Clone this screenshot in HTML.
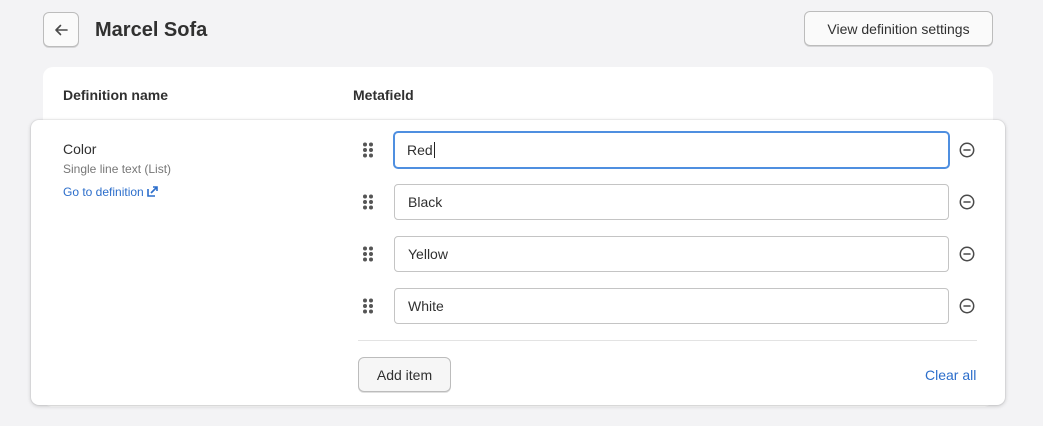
<!DOCTYPE html>
<html><head><style>
*{box-sizing:border-box;margin:0;padding:0}
body{width:1043px;height:426px;background:#f3f3f5;font-family:"Liberation Sans",sans-serif;color:#303030;position:relative;overflow:hidden;font-size:14px}
.abs{position:absolute}
.btn{position:absolute;background:#fafafa;border:1px solid #bcbcbc;border-radius:6px;box-shadow:0 1px 0 rgba(0,0,0,.12);display:flex;align-items:center;justify-content:center;font-size:14px;color:#303030}
.inp{position:absolute;left:394px;width:555px;height:36px;border:1px solid #c4c4c4;border-radius:4px;background:#fff;padding-left:13px;display:flex;align-items:center;font-size:14px;color:#303030}
.drag{position:absolute;left:362px;width:12px;height:16px}
.minus{position:absolute;left:959px;width:16px;height:16px}
</style></head><body>
<div class="btn" style="left:43px;top:12px;width:36px;height:35px">
<svg width="16" height="16" viewBox="0 0 16 16"><path d="M14 8H3M7.5 3.5L3 8l4.5 4.5" fill="none" stroke="#4a4a4a" stroke-width="1.6" stroke-linecap="round" stroke-linejoin="round"/></svg></div>
<div class="abs" style="left:95px;top:19px;font-size:20px;font-weight:bold;color:#303030">Marcel Sofa</div>
<div class="btn" style="left:804px;top:11px;width:189px;height:35px">View definition settings</div>
<div class="abs" style="left:43px;top:67px;width:950px;height:340px;background:#fff;border-radius:10px"></div>
<div class="abs" style="left:63px;top:87px;font-weight:bold;font-size:14px">Definition name</div>
<div class="abs" style="left:353px;top:87px;font-weight:bold;font-size:14px">Metafield</div>
<div class="abs" style="left:31px;top:120px;width:974px;height:285px;background:#fff;border-radius:8px;box-shadow:0 1px 4px rgba(0,0,0,.2),0 0 0 1px rgba(0,0,0,.04)"></div>
<div class="abs" style="left:63px;top:141px;font-size:14px">Color</div>
<div class="abs" style="left:63px;top:162px;font-size:12px;color:#777">Single line text (List)</div>
<div class="abs" style="left:63px;top:185px;font-size:12px;color:#2c6ecb">Go to definition <svg width="11" height="11" viewBox="0 0 11 11" style="vertical-align:-1px"><path d="M1 3v7h7M4 7l6-6M6 1h4v4" fill="none" stroke="#2c6ecb" stroke-width="1.6"/></svg></div>

<div class="inp" style="left:393px;top:131px;width:557px;height:38px;border:2px solid #4f8fe0;border-radius:5px;padding-left:12px">Red<span style="display:inline-block;width:1px;height:16px;background:#222;margin-left:1px"></span></div>
<div class="inp" style="top:184px">Black</div>
<div class="inp" style="top:236px">Yellow</div>
<div class="inp" style="top:288px">White</div>

<svg class="drag" style="top:142px" viewBox="0 0 12 16"><g fill="#555"><circle cx="3" cy="2.5" r="2"/><circle cx="9" cy="2.5" r="2"/><circle cx="3" cy="8" r="2"/><circle cx="9" cy="8" r="2"/><circle cx="3" cy="13.5" r="2"/><circle cx="9" cy="13.5" r="2"/></g></svg>
<svg class="drag" style="top:194px" viewBox="0 0 12 16"><g fill="#555"><circle cx="3" cy="2.5" r="2"/><circle cx="9" cy="2.5" r="2"/><circle cx="3" cy="8" r="2"/><circle cx="9" cy="8" r="2"/><circle cx="3" cy="13.5" r="2"/><circle cx="9" cy="13.5" r="2"/></g></svg>
<svg class="drag" style="top:246px" viewBox="0 0 12 16"><g fill="#555"><circle cx="3" cy="2.5" r="2"/><circle cx="9" cy="2.5" r="2"/><circle cx="3" cy="8" r="2"/><circle cx="9" cy="8" r="2"/><circle cx="3" cy="13.5" r="2"/><circle cx="9" cy="13.5" r="2"/></g></svg>
<svg class="drag" style="top:298px" viewBox="0 0 12 16"><g fill="#555"><circle cx="3" cy="2.5" r="2"/><circle cx="9" cy="2.5" r="2"/><circle cx="3" cy="8" r="2"/><circle cx="9" cy="8" r="2"/><circle cx="3" cy="13.5" r="2"/><circle cx="9" cy="13.5" r="2"/></g></svg>

<svg class="minus" style="top:142px" viewBox="0 0 16 16"><circle cx="8" cy="8" r="6.7" fill="none" stroke="#4a4a4a" stroke-width="1.5"/><path d="M5 8h6" stroke="#4a4a4a" stroke-width="1.5" stroke-linecap="round"/></svg>
<svg class="minus" style="top:194px" viewBox="0 0 16 16"><circle cx="8" cy="8" r="6.7" fill="none" stroke="#4a4a4a" stroke-width="1.5"/><path d="M5 8h6" stroke="#4a4a4a" stroke-width="1.5" stroke-linecap="round"/></svg>
<svg class="minus" style="top:246px" viewBox="0 0 16 16"><circle cx="8" cy="8" r="6.7" fill="none" stroke="#4a4a4a" stroke-width="1.5"/><path d="M5 8h6" stroke="#4a4a4a" stroke-width="1.5" stroke-linecap="round"/></svg>
<svg class="minus" style="top:298px" viewBox="0 0 16 16"><circle cx="8" cy="8" r="6.7" fill="none" stroke="#4a4a4a" stroke-width="1.5"/><path d="M5 8h6" stroke="#4a4a4a" stroke-width="1.5" stroke-linecap="round"/></svg>

<div class="abs" style="left:358px;top:340px;width:619px;height:1px;background:#e3e3e3"></div>
<div class="btn" style="left:358px;top:357px;width:93px;height:35px;background:#f6f6f6">Add item</div>
<div class="abs" style="left:925px;top:367px;font-size:14px;color:#2c6ecb">Clear all</div>
</body></html>
